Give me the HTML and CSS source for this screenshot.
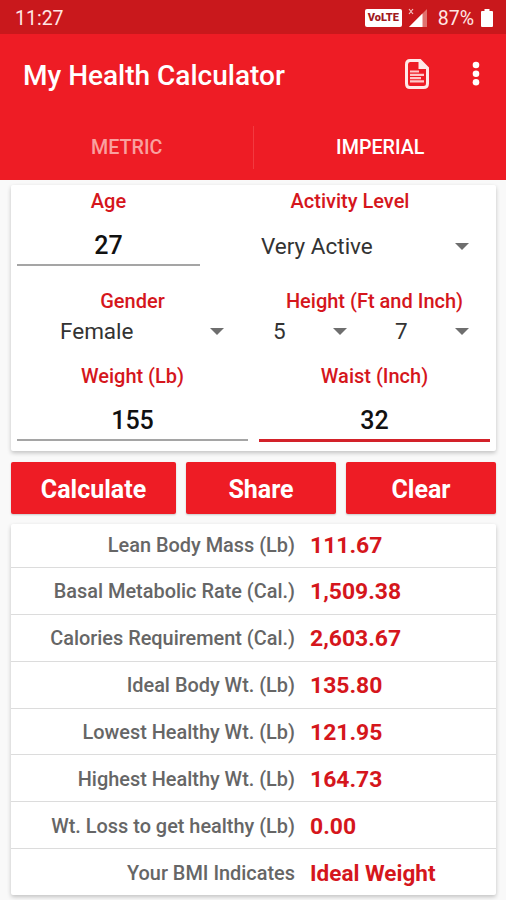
FILE: index.html
```html
<!DOCTYPE html>
<html lang="en">
<head>
  <meta charset="UTF-8">
  <meta name="viewport" content="width=device-width, initial-scale=1.0">
  <title>My Health Calculator</title>
  <link rel="stylesheet" href="styles.css">
</head>
<body>
  <div class="status-bar">
    <span class="clock">11:27</span>
    <span class="volte">VoLTE</span>
    <svg class="signal" width="20" height="20" viewBox="0 0 20 20">
      <path d="M19 1V19H1Z" fill="#e0716f"/>
      <path d="M14.500 5.500V19H1Z" fill="#fff"/>
      <path d="M1 1L5 6M5 1L1 6" stroke="#f5c4c2" stroke-width="1.200"/>
    </svg>
    <span class="percent">87%</span>
    <svg class="battery" width="12" height="18" viewBox="0 0 12 18">
      <path d="M3.500 0h5v2H11q1 0 1 1v14q0 1-1 1H1q-1 0-1-1V3q0-1 1-1h2.500z" fill="#fff"/>
    </svg>
  </div>

  <header class="app-bar">
    <div class="toolbar">
      <h1>My Health Calculator</h1>
      <svg class="doc-icon" width="24" height="30" viewBox="0 0 24 30">
        <path d="M5 1.500h10L22.500 9v15.500q0 4-4 4H5q-3.500 0-3.500-4V5.500q0-4 3.500-4z" fill="none" stroke="#ffe9e8" stroke-width="3"/>
        <path d="M13.500 1.500L22.500 10H13.500z" fill="#ffe9e8"/>
        <path d="M5 12.500H14M5 15.800H19M5 19.100H16M5 22.400H19" stroke="#ffc9c9" stroke-width="2.200"/>
      </svg>
      <svg class="more-icon" width="8" height="26" viewBox="0 0 8 26">
        <g fill="#fff">
          <circle cx="4" cy="4" r="3.300"/>
          <circle cx="4" cy="12.700" r="3.300"/>
          <circle cx="4" cy="21.300" r="3.300"/>
        </g>
      </svg>
    </div>
    <nav class="tabs">
      <a class="tab">METRIC</a>
      <a class="tab active">IMPERIAL</a>
    </nav>
  </header>

  <main>
    <form class="card form">
      <div class="row row-age">
        <div class="field">
          <label for="age">Age</label>
          <input type="text" id="age" value="27">
        </div>
        <div class="field">
          <label>Activity Level</label>
          <div class="select tall"><span>Very Active</span><i class="arrow"></i></div>
        </div>
      </div>
      <div class="row row-gender">
        <div class="field">
          <label>Gender</label>
          <div class="select gender"><span>Female</span><i class="arrow"></i></div>
        </div>
        <div class="field">
          <label>Height (Ft and Inch)</label>
          <div class="pair">
            <div class="select"><span>5</span><i class="arrow"></i></div>
            <div class="select"><span>7</span><i class="arrow"></i></div>
          </div>
        </div>
      </div>
      <div class="row">
        <div class="field">
          <label for="weight">Weight (Lb)</label>
          <input type="text" id="weight" value="155">
        </div>
        <div class="field">
          <label for="waist">Waist (Inch)</label>
          <input type="text" id="waist" class="focused" value="32">
        </div>
      </div>
    </form>

    <div class="buttons">
      <button type="button">Calculate</button>
      <button type="button">Share</button>
      <button type="button">Clear</button>
    </div>

    <div class="card results">
      <div class="result"><span class="name">Lean Body Mass (Lb)</span><span class="value">111.67</span></div>
      <div class="result"><span class="name">Basal Metabolic Rate (Cal.)</span><span class="value">1,509.38</span></div>
      <div class="result"><span class="name">Calories Requirement (Cal.)</span><span class="value">2,603.67</span></div>
      <div class="result"><span class="name">Ideal Body Wt. (Lb)</span><span class="value">135.80</span></div>
      <div class="result"><span class="name">Lowest Healthy Wt. (Lb)</span><span class="value">121.95</span></div>
      <div class="result"><span class="name">Highest Healthy Wt. (Lb)</span><span class="value">164.73</span></div>
      <div class="result"><span class="name">Wt. Loss to get healthy (Lb)</span><span class="value">0.00</span></div>
      <div class="result"><span class="name">Your BMI Indicates</span><span class="value text">Ideal Weight</span></div>
    </div>
  </main>
</body>
</html>
```
FILE: styles.css
```css
* {
  box-sizing: border-box;
}
body {
  margin: 0;
  height: 900px;
  overflow: hidden;
  font-family: Roboto, sans-serif;
  background: #f9f9f9;
}

/* Status bar */
.status-bar {
  display: flex;
  align-items: center;
  height: 34px;
  padding: 2px 13px 0 15px;
  background: #c9181c;
  color: #ffe6e4;
  font-size: 19.500px;
}
.clock {
  flex: 1;
}
.volte {
  width: 37px;
  height: 18px;
  margin-right: 6px;
  border-radius: 2px;
  background: #fff;
  color: #a01a1c;
  font-size: 11px;
  font-weight: 900;
  line-height: 18px;
  text-align: center;
}
.signal {
  margin-right: 10px;
}
.percent {
  margin-right: 7px;
}

/* App bar */
.app-bar {
  height: 146px;
  background: #ee1c25;
  color: #fff;
}
.toolbar {
  display: flex;
  align-items: center;
  height: 80px;
  padding: 0 26px 0 23px;
}
h1 {
  flex: 1;
  margin: 0;
  padding-top: 2px;
  font-size: 28px;
  font-weight: 500;
  white-space: nowrap;
}
.doc-icon {
  margin-right: 43px;
}
.tabs {
  display: flex;
  height: 66px;
}
.tab {
  flex: 1;
  padding-left: 1px;
  line-height: 67px;
  text-align: center;
  font-size: 19.700px;
  font-weight: 500;
  color: #f9a09f;
}
.tab.active {
  padding-left: 2px;
  color: #fff;
  background: linear-gradient(#f23a40, #f23a40) 0 12px / 1px 43px no-repeat;
}

/* Cards */
main {
  padding: 5px 10px 0 11px;
}
.card {
  background: #fff;
  border-radius: 2px;
  box-shadow: 0 2px 4px rgba(0, 0, 0, 0.22);
}
.form {
  height: 266px;
  padding: 0 6px;
}
.row {
  display: grid;
  grid-template-columns: 1fr 1fr;
  column-gap: 11px;
}
.row-age {
  grid-template-columns: 183px 1fr;
  column-gap: 10px;
  height: 100px;
}
.row-gender {
  height: 75px;
}
label {
  display: block;
  height: 32px;
  line-height: 32px;
  text-align: center;
  font-size: 20px;
  font-weight: 500;
  color: #d5161c;
}
input {
  display: block;
  width: 100%;
  height: 49px;
  padding: 9px 0 0;
  border: 0;
  border-bottom: 2px solid #a5a5a5;
  background: none;
  font-family: inherit;
  font-size: 25px;
  font-weight: 500;
  text-align: center;
  color: #111;
  outline: none;
}
input.focused {
  height: 50px;
  border-bottom: 3px solid #d3222a;
}
.select {
  display: flex;
  align-items: center;
  justify-content: space-between;
  height: 28px;
  padding: 0 21px 0 14px;
  font-size: 22.500px;
  color: #333;
}
.select.tall {
  height: 58px;
  padding-left: 51px;
}
.select.gender {
  padding: 0 24px 0 43px;
}
.pair {
  display: grid;
  grid-template-columns: 122px 109px;
}
.pair .select:first-child {
  padding-right: 34px;
}
.arrow {
  border: 7px solid transparent;
  border-top-color: #6e6e6e;
  border-bottom: 0;
}

/* Buttons */
.buttons {
  display: grid;
  grid-template-columns: 165px 150px 150px;
  column-gap: 10px;
  margin: 11px 0 10px;
}
button {
  height: 52px;
  padding: 2px 0 0;
  border: 0;
  border-radius: 2px;
  background: #ee1c25;
  box-shadow: 0 1px 2px rgba(0, 0, 0, 0.2);
  color: #fff;
  font-family: inherit;
  font-size: 25px;
  font-weight: 700;
}

/* Results */
.results {
  height: 371px;
}
.result {
  display: grid;
  grid-template-columns: 284px 1fr;
  column-gap: 15px;
  align-items: center;
  height: 46.850px;
  padding-top: 2px;
  border-bottom: 1px solid #dcdcdc;
}
.result:first-child {
  height: 44px;
  padding-top: 0;
}
.result:last-child {
  border-bottom: 0;
}
.name {
  text-align: right;
  font-size: 19.900px;
  font-weight: 500;
  color: #666;
}
.value {
  font-size: 22.900px;
  font-weight: 700;
  color: #d5161c;
}
.value.text {
  font-size: 22.500px;
}
```
